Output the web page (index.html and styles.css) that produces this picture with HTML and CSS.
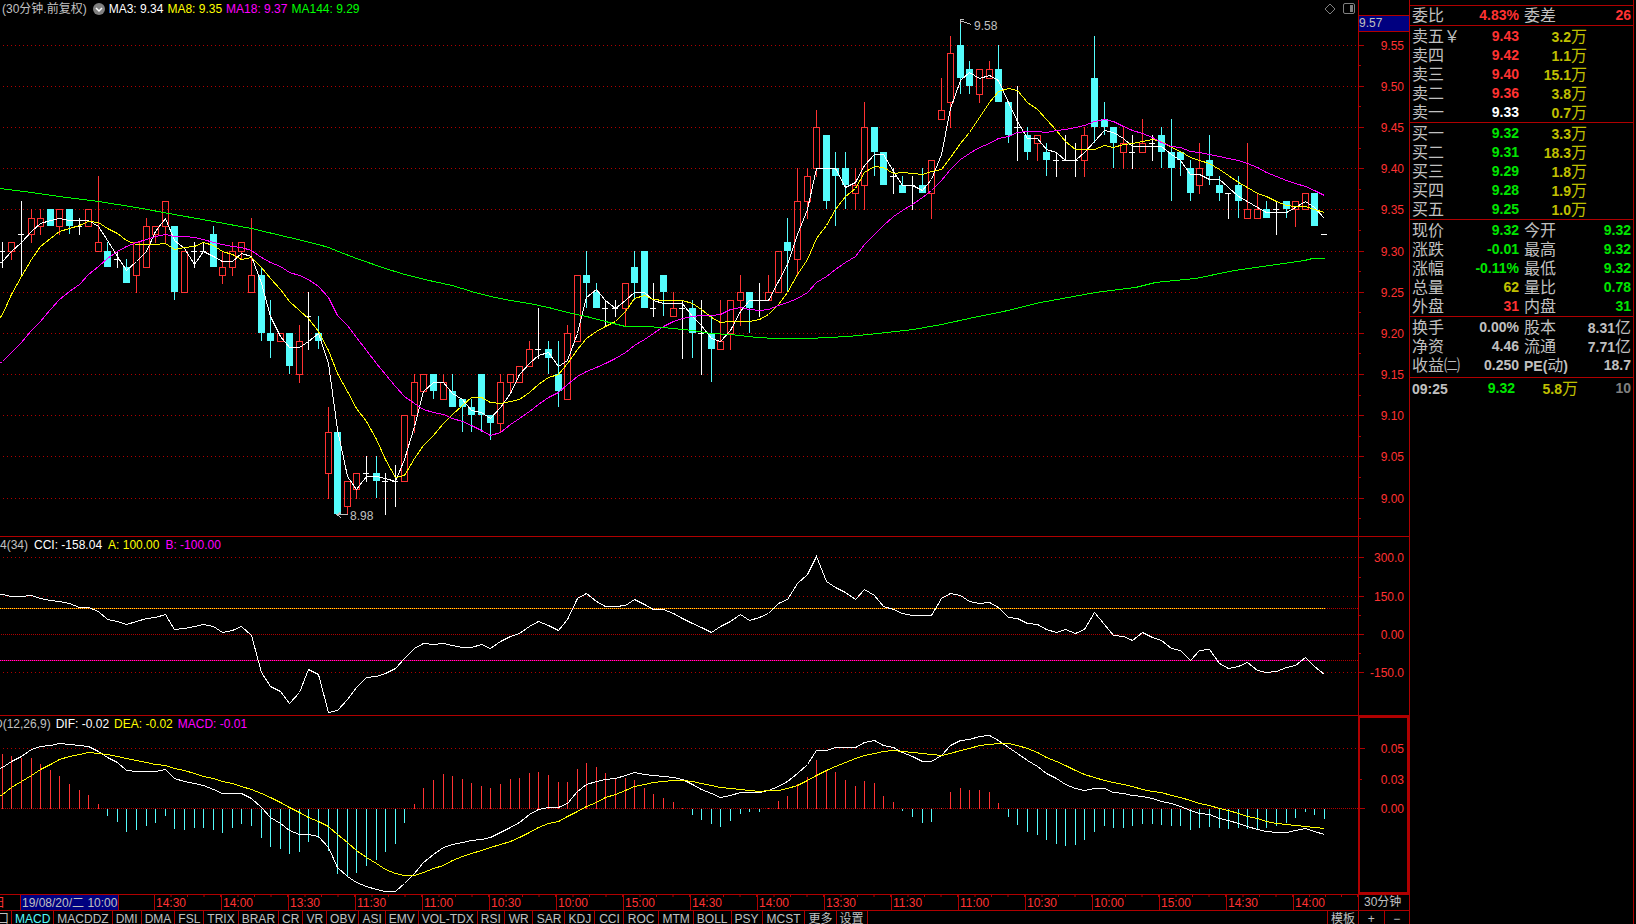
FILE: index.html
```html
<!DOCTYPE html>
<html lang="zh-CN">
<head>
<meta charset="utf-8">
<title>30分钟 K线</title>
<link rel="stylesheet" href="styles.css">
</head>
<body>
<div class="terminal">
  <main class="board">
    <section class="pane">
      <header class="pane-head pane-head-main">
        <span class="dim">(30分钟.前复权)</span>
        <button class="icon-btn" aria-label="展开">
          <svg width="12" height="12" viewBox="0 0 12 12"><circle cx="6" cy="6" r="6" fill="#808080"/><path d="M3 5l3 3 3-3" fill="none" stroke="#fff" stroke-width="1.5"/></svg>
        </button>
        <span class="white">MA3: 9.34</span>
        <span class="yellow">MA8: 9.35</span>
        <span class="magenta">MA18: 9.37</span>
        <span class="lime">MA144: 9.29</span>
        <span class="head-tools">
          <button class="icon-btn" aria-label="标记">
            <svg width="12" height="12" viewBox="0 0 12 12"><path d="M6 1l5 5-5 5-5-5z" fill="none" stroke="#808080"/></svg>
          </button>
          <button class="icon-btn" aria-label="侧栏">
            <svg width="12" height="12" viewBox="0 0 12 12"><rect x=".5" y=".5" width="11" height="10" rx="1.5" fill="none" stroke="#808080"/><rect x="7" y="2" width="3" height="7" fill="#808080"/></svg>
          </button>
        </span>
      </header>
      <svg class="plot" id="kline"></svg>
    </section>
    <aside class="axis">
      <svg class="plot" id="kline-axis"></svg>
      <div class="cursor-price">9.57</div>
    </aside>

    <section class="pane">
      <header class="pane-head pane-head-cci">
        <span class="dim">4(34)</span>
        <span class="white">CCI: -158.04</span>
        <span class="yellow">A: 100.00</span>
        <span class="magenta">B: -100.00</span>
      </header>
      <svg class="plot" id="cci"></svg>
    </section>
    <aside class="axis"><svg class="plot" id="cci-axis"></svg></aside>

    <section class="pane pane-last">
      <header class="pane-head pane-head-cut">
        <span class="dim">D(12,26,9)</span>
        <span class="white">DIF: -0.02</span>
        <span class="yellow">DEA: -0.02</span>
        <span class="magenta">MACD: -0.01</span>
      </header>
      <svg class="plot" id="macd"></svg>
    </section>
    <aside class="axis axis-active"><svg class="plot" id="macd-axis"></svg></aside>

    <div class="times">
      <div class="time-first"><span class="day">日</span><span class="cursor-time">19/08/20/二 10:00</span></div>
      <div class="time">14:30</div><div class="time">14:00</div><div class="time">13:30</div>
      <div class="time">11:30</div><div class="time">11:00</div><div class="time">10:30</div>
      <div class="time">10:00</div><div class="time">15:00</div><div class="time">14:30</div>
      <div class="time">14:00</div><div class="time">13:30</div><div class="time">11:30</div>
      <div class="time">11:00</div><div class="time">10:30</div><div class="time">10:00</div>
      <div class="time">15:00</div><div class="time">14:30</div><div class="time">14:00</div>
    </div>
    <div class="period">30分钟</div>

    <nav class="tabs">
      <button class="tab tab-cut">口</button>
      <button class="tab tab-on">MACD</button>
      <button class="tab">MACDDZ</button>
      <button class="tab">DMI</button>
      <button class="tab">DMA</button>
      <button class="tab">FSL</button>
      <button class="tab">TRIX</button>
      <button class="tab">BRAR</button>
      <button class="tab">CR</button>
      <button class="tab">VR</button>
      <button class="tab">OBV</button>
      <button class="tab">ASI</button>
      <button class="tab">EMV</button>
      <button class="tab">VOL-TDX</button>
      <button class="tab">RSI</button>
      <button class="tab tab-wide">WR</button>
      <button class="tab tab-wide">SAR</button>
      <button class="tab">KDJ</button>
      <button class="tab tab-wide">CCI</button>
      <button class="tab tab-wide">ROC</button>
      <button class="tab tab-wide">MTM</button>
      <button class="tab">BOLL</button>
      <button class="tab">PSY</button>
      <button class="tab tab-wide">MCST</button>
      <button class="tab tab-wide">更多</button>
      <button class="tab">设置</button>
      <button class="tab tab-end">模板</button>
    </nav>
    <div class="zoomers"><button class="tab">+</button><button class="tab">−</button></div>
  </main>

  <aside class="quote">
    <table class="sheet sheet-top">
      <tr><th>委比</th><td class="red">4.83%</td><th>委差</th><td class="red">26</td></tr>
    </table>
    <table class="sheet book">
      <tr><th>卖五￥</th><td class="red">9.43</td><td class="gold">3.2<i>万</i></td><td></td></tr>
      <tr><th>卖四</th><td class="red">9.42</td><td class="gold">1.1<i>万</i></td><td></td></tr>
      <tr><th>卖三</th><td class="red">9.40</td><td class="gold">15.1<i>万</i></td><td></td></tr>
      <tr><th>卖二</th><td class="red">9.36</td><td class="gold">3.8<i>万</i></td><td></td></tr>
      <tr><th>卖一</th><td class="white">9.33</td><td class="gold">0.7<i>万</i></td><td></td></tr>
    </table>
    <table class="sheet book">
      <tr><th>买一</th><td class="green">9.32</td><td class="gold">3.3<i>万</i></td><td></td></tr>
      <tr><th>买二</th><td class="green">9.31</td><td class="gold">18.3<i>万</i></td><td></td></tr>
      <tr><th>买三</th><td class="green">9.29</td><td class="gold">1.8<i>万</i></td><td></td></tr>
      <tr><th>买四</th><td class="green">9.28</td><td class="gold">1.9<i>万</i></td><td></td></tr>
      <tr><th>买五</th><td class="green">9.25</td><td class="gold">1.0<i>万</i></td><td></td></tr>
    </table>
    <table class="sheet">
      <tr><th>现价</th><td class="green">9.32</td><th>今开</th><td class="green">9.32</td></tr>
      <tr><th>涨跌</th><td class="green">-0.01</td><th>最高</th><td class="green">9.32</td></tr>
      <tr><th>涨幅</th><td class="green">-0.11%</td><th>最低</th><td class="green">9.32</td></tr>
      <tr><th>总量</th><td class="gold">62</td><th>量比</th><td class="green">0.78</td></tr>
      <tr><th>外盘</th><td class="red">31</td><th>内盘</th><td class="green">31</td></tr>
    </table>
    <table class="sheet sheet-basics">
      <tr><th>换手</th><td>0.00%</td><th>股本</th><td>8.31<i>亿</i></td></tr>
      <tr><th>净资</th><td>4.46</td><th>流通</th><td>7.71<i>亿</i></td></tr>
      <tr><th>收益㈡</th><td>0.250</td><th><b>PE(</b>动<b>)</b></th><td>18.7</td></tr>
    </table>
    <table class="sheet sheet-last">
      <tr><th><b>09:25</b></th><td class="green">9.32</td><td class="gold">5.8<i>万</i></td><td class="faint">10</td></tr>
    </table>
  </aside>
</div>
<script src="chart.js"></script>
</body>
</html>
```
FILE: styles.css
```css
* { box-sizing: border-box; }

:root {
  --line: #b00000;
  --red: #ff3232;
  --grey: #c0c0c0;
  --navy: #000080;
}

body {
  margin: 0;
  background: #000;
  color: var(--grey);
  font: 12px/16px "Liberation Sans", "Noto Sans CJK SC", sans-serif;
}

button {
  margin: 0;
  padding: 0;
  border: 0;
  background: none;
  color: inherit;
  font: inherit;
}

.terminal {
  display: grid;
  grid-template-columns: 1fr 227px;
  height: 100vh;
  overflow: hidden;
}

.board {
  display: grid;
  grid-template-columns: minmax(0, 1fr) 51px;
  grid-template-rows: minmax(0, 537fr) minmax(0, 179fr) minmax(0, 178fr) 16px 14px;
  min-width: 0;
}

.pane,
.axis {
  position: relative;
  overflow: hidden;
  border-bottom: 1px solid var(--line);
}

.pane-last { border-bottom: 0; }

.axis { border-left: 1px solid var(--line); }

.axis-active { border: 2px solid var(--line); }

.plot {
  position: absolute;
  inset: 0;
  width: 100%;
  height: 100%;
}

.pane-head {
  position: relative;
  z-index: 1;
  display: flex;
  gap: 5px;
  white-space: nowrap;
}

.pane-head-main {
  align-items: center;
  gap: 4px;
  padding: 1px 3px 0 2px;
}

.pane-head-main > .icon-btn { margin-left: 2px; }

.pane-head-cci { gap: 6px; }

.pane-head-cut { margin-left: -6px; }

.head-tools {
  display: flex;
  gap: 7px;
  margin-left: auto;
}

.icon-btn { display: flex; }

.cursor-price {
  position: absolute;
  top: 15px;
  left: 0;
  right: 0;
  height: 17px;
  border: solid var(--line);
  border-width: 1px 0;
  background: var(--navy);
  line-height: 15px;
}

.times {
  display: grid;
  grid-template-columns: 154fr repeat(17, 67fr) 65fr;
  border-top: 1px solid var(--line);
  line-height: 16px;
  color: var(--red);
  overflow: hidden;
}

.time-first {
  display: flex;
  overflow: hidden;
}

.day {
  flex: 0 0 20px;
  text-indent: -7px;
}

.cursor-time {
  flex: none;
  padding: 0 1px;
  border: solid var(--line);
  border-width: 0 1px;
  background: var(--navy);
  color: var(--grey);
}

.time {
  padding-left: 1px;
  border-left: 1px solid var(--line);
  background: linear-gradient(90deg, transparent calc(100% - 1px), var(--line) 0) 0 0 / 25% 2px repeat-x;
}

.period {
  border: solid var(--line);
  border-width: 1px 0 0 1px;
  padding-left: 5px;
  line-height: 15px;
  white-space: nowrap;
}

.tabs,
.zoomers {
  display: flex;
  min-width: 0;
  border-top: 1px solid var(--line);
  overflow: hidden;
}

.tab {
  flex: none;
  padding: 0 3px;
  border-right: 1px solid var(--line);
  line-height: 16px;
}

.tab-wide { padding-left: 4px; }

.tab-cut {
  width: 12px;
  padding: 0;
  text-indent: -5px;
}

.tab-on { color: #54fcfc; }

.tab-end {
  margin-left: auto;
  border-left: 1px solid var(--line);
  border-right: 0;
}

.zoomers { border-left: 1px solid var(--line); }

.zoomers .tab { flex: 1; }

.zoomers .tab:last-child { border-right: 0; }

.quote {
  margin-right: 2px;
  padding-top: 5px;
  border: solid var(--line);
  border-width: 0 1px;
}

.sheet {
  display: block;
  padding: 1px 2px 0 2px;
  border-top: 1px solid var(--line);
}

.sheet tbody { display: block; }

.sheet tr {
  display: grid;
  grid-template-columns: 48px 59px 53px 1fr;
  height: 19px;
  line-height: 19px;
}

.book tr { grid-template-columns: 48px 59px 68px 1fr; }

.sheet-last tr { grid-template-columns: 48px 55px 63px 1fr; }

.sheet-top { padding-top: 0; }

.sheet-basics { padding-bottom: 2px; }

.sheet th,
.sheet td {
  padding: 0;
  white-space: nowrap;
}

.sheet th {
  font-size: 16px;
  font-weight: 400;
  text-align: left;
}

.sheet td + th { padding-left: 5px; }

.sheet th b {
  font-size: 14px;
  font-weight: 700;
}

.sheet td {
  font-size: 14px;
  font-weight: 700;
  text-align: right;
}

.sheet i {
  font-size: 16px;
  font-style: normal;
  font-weight: 400;
}

.dim { color: var(--grey); }
.white { color: #fff; }
.yellow { color: #ff0; }
.magenta { color: #f0f; }
.lime { color: #0f0; }
.red { color: var(--red); }
.green { color: #00e600; }
.gold { color: #c0c000; }
.faint { color: #808080; }

.bar-up { fill: none; stroke: var(--red); }
.bar-down { fill: #54fcfc; stroke: #54fcfc; }
.bar-flat { fill: none; stroke: #fff; }
.rule { fill: none; stroke: var(--line); }
.curve { fill: none; }
.axis-text { fill: var(--red); text-anchor: end; }
.note { fill: var(--grey); }
.note-line { fill: none; stroke: var(--grey); }
.crisp { shape-rendering: crispEdges; }
```
FILE: chart.js
```javascript
// Bars as [open, high, low, close], prices in hundredths above 8.00.
const BARS = [
  [130,131,128,130],[130,131,129,131],[132,136,127,132],[132,135,131,134],[133,135,132,134],
  [135,135,133,133],[133,135,132,135],[135,135,132,133],[133,134,132,133],[133,135,133,135],
  [130,139,130,131],[130,131,128,128],[129,130,128,129],[128,129,126,126],[127,131,125,131],
  [128,134,128,133],[132,133,131,133],[133,136,131,136],[133,133,124,125],[125,130,125,130],
  [130,131,128,130],[130,131,130,130],[132,133,128,128],[127,130,126,128],[128,131,127,130],
  [130,131,129,131],[125,134,125,127],[127,128,119,120],[120,124,117,119],[119,120,119,120],
  [120,120,115,116],[115,121,114,119],[122,125,118,122],[120,122,118,119],[103,111,100,108],
  [108,108,98,98],[99,102,98,102],[101,103,100,103],[103,105,102,103],[103,105,100,102],
  [102,103,98,102],[102,104,99,102],[102,110,102,110],[110,115,108,114],[113,115,113,115],
  [115,115,112,113],[112,115,112,114],[113,115,111,111],[112,112,108,111],[111,112,108,110],
  [115,115,108,110],[110,110,107,109],[109,115,108,114],[114,115,113,115],[114,116,114,116],
  [116,119,116,118],[118,123,117,118],[118,119,115,117],[115,119,111,113],[112,121,112,120],
  [119,127,119,127],[127,130,123,126],[125,126,123,123],[123,124,121,123],[123,124,122,123],
  [123,126,121,126],[128,130,124,126],[130,130,123,123],[123,126,122,123],[127,127,122,125],
  [122,125,122,123],[123,124,117,123],[123,124,117,120],[120,124,115,120],[120,122,114,118],
  [118,124,118,119],[120,124,118,124],[124,127,121,125],[125,125,120,123],[124,126,122,124],
  [124,127,124,125],[125,130,125,130],[131,134,125,130],[129,140,127,136],[136,140,134,139],
  [140,147,139,145],[144,144,135,136],[140,142,133,139],[140,142,135,138],[137,140,135,138],
  [138,148,135,145],[145,145,139,142],[142,142,138,138],[139,140,137,139],[138,139,137,137],
  [138,139,135,138],[138,140,137,137],[137,141,134,141],[146,151,146,147],[148,156,145,154],
  [155,158,149,151],[152,153,149,150],[149,152,148,152],[151,153,151,152],[152,155,148,148],
  [148,148,143,144],[145,150,141,145],[144,145,141,142],[143,144,141,144],[142,143,139,141],
  [141,142,139,141],[141,144,141,141],[141,143,139,141],[141,145,139,144],[151,156,143,145],
  [146,148,144,145],[145,145,140,143],[142,145,140,143],[142,144,140,142],[142,146,142,143],
  [143,144,141,143],[144,145,140,142],[142,146,136,140],[142,142,139,141],[140,141,136,137],
  [138,143,137,140],[141,144,138,139],[138,139,136,137],[137,137,134,137],[138,139,134,136],
  [134,143,134,135],[134,137,134,135],[135,136,134,134],[135,136,132,135],[136,136,134,135],
  [135,136,133,136],[135,137,135,137],[137,137,133,133],[132,132,132,132]
];

// Averages of the bars that precede a full window.
const MA3_HEAD = [128.7, 130];
const MA8_HEAD = [122.3, 124.7, 126.9, 129, 130.6, 131.5, 132.4];
const MA18_HEAD = [116.6, 117.7, 118.9, 120.3, 121.5, 122.9, 124.1, 125.1, 125.9, 127.1,
  128.1, 129.1, 129.9, 130.5, 131, 131.4, 131.8];

// Long average as x, y pairs.
const MA144 = [[0,188],[31,192],[59,196],[98,201],[136,207],[174,214],[213,221],[251,228],
  [289,237],[318,244],[328,247],[338,251],[356,258],[385,268],[404,274],[433,281],[452,285],
  [471,291],[490,296],[510,300],[529,303],[548,307],[567,312],[586,316],[605,321],[625,326],
  [644,326],[663,327],[692,330],[711,333],[730,334],[757,337],[776,338],[808,338],[848,336],
  [877,333],[913,329],[941,324],[973,317],[1003,311],[1040,302],[1095,292],[1135,287],
  [1155,282],[1195,278],[1234,270],[1283,263],[1304,260],[1312,258],[1324,258]];

// Indicator curves: height per bar, three units to a pixel.
const CCI = [193,198,199,196,204,210,213,220,230,232,242,267,272,283,274,263,262,253,298,293,
  287,283,289,307,299,289,316,427,469,482,520,487,418,432,547,541,507,470,442,437,
  430,415,385,353,340,343,340,344,352,352,343,354,334,319,308,288,272,286,300,266,
  204,190,213,229,229,224,208,222,238,236,250,265,278,290,307,288,273,251,271,260,
  248,218,207,160,132,79,153,172,185,206,178,194,227,237,250,256,256,256,203,189,
  196,214,220,217,231,262,263,280,281,298,305,298,310,297,247,281,316,319,331,307,
  322,331,355,359,391,361,358,400,415,409,397,421,425,424,412,406,382,409,431];
const DIF = [170,154,137,118,109,105,100,102,106,107,122,142,157,181,184,184,184,178,205,213,
  219,226,237,250,250,250,263,292,320,338,360,371,371,377,412,470,498,516,528,537,
  544,544,518,488,456,433,412,401,395,391,387,381,366,350,335,313,298,290,292,279,
  244,221,213,208,205,195,187,192,196,197,202,208,222,236,249,260,254,247,247,247,
  240,228,214,188,163,121,121,112,112,112,95,91,104,112,126,138,152,152,135,105,
  91,88,79,76,90,112,130,150,167,188,205,223,234,239,235,235,245,250,256,259,
  265,272,280,287,301,308,313,323,331,338,348,356,362,365,365,361,355,362,371];
const DEA = [252,232,212,194,176,162,148,139,133,127,128,131,137,145,151,157,162,166,174,181,
  189,197,204,213,220,227,237,248,262,277,291,306,321,332,348,372,396,419,441,460,
  478,490,496,494,487,475,464,450,439,429,421,412,403,394,380,366,352,340,332,319,
  303,289,275,261,251,240,229,222,217,213,211,209,212,218,225,232,235,238,241,242,
  241,239,233,224,210,194,179,167,155,145,136,129,123,121,122,125,130,132,136,129,
  121,115,106,101,98,99,105,114,127,140,152,166,179,191,200,209,215,221,229,236,
  242,247,254,260,269,278,285,293,300,309,317,324,332,338,343,346,349,352,355];

const NS = 'http://www.w3.org/2000/svg';
const BASE = { width: 1358, kline: 536, cci: 178, macd: 178 };
const priceY = v => 44.6 + (155 - v) * 8.236;

function add(svg, tag, cls, attrs, text) {
  const el = document.createElementNS(NS, tag);
  el.setAttribute('class', cls);
  for (const key in attrs) el.setAttribute(key, attrs[key]);
  if (text) el.textContent = text;
  svg.appendChild(el);
  return el;
}

function panel(id, baseHeight) {
  const svg = document.getElementById(id);
  svg.replaceChildren();
  const box = svg.getBoundingClientRect();
  const sx = box.width / BASE.width;
  const sy = box.height / baseHeight;
  return {
    svg,
    width: box.width,
    x: v => Math.round(v * sx),
    bar: i => Math.round((1.9 + i * 9.58) * sx),
    y: v => Math.round(v * sy)
  };
}

function rule(p, y, step, from = 3) {
  add(p.svg, 'path', 'rule crisp', {
    d: `M${from} ${y + 0.5}H${p.width}`,
    'stroke-dasharray': `1 ${step - 1}`
  });
}

function curve(p, points, color) {
  const d = points.map(([x, y], i) => `${i ? 'L' : 'M'}${x + 0.5} ${y + 0.5}`).join('');
  add(p.svg, 'path', 'curve crisp', { d, stroke: color });
}

function average(n, head) {
  return BARS.map((bar, i) => {
    if (i < n - 1) return head[i];
    let sum = 0;
    for (let k = i - n + 1; k <= i; k++) sum += BARS[k][3];
    return sum / n;
  });
}

function extendLeft(points) {
  const [a, b] = points;
  const y = a[1] - Math.round((b[1] - a[1]) * a[0] / (b[0] - a[0]));
  return [[-1, y], ...points];
}

function drawKline() {
  const p = panel('kline', BASE.kline);
  const price = v => p.y(priceY(v));
  for (let v = 155; v >= 100; v -= 5) rule(p, price(v), 4);

  BARS.forEach(([open, high, low, close], i) => {
    const x = p.bar(i);
    const top = price(Math.max(open, close));
    const bottom = price(Math.min(open, close));
    const hi = price(high);
    const lo = price(low);
    if (open === close) {
      add(p.svg, 'path', 'bar-flat crisp', {
        d: `M${x - 3} ${top + 0.5}h6` + (hi === lo ? '' : `M${x + 0.5} ${hi}V${lo + 1}`)
      });
    } else if (close > open) {
      add(p.svg, 'path', 'bar-up crisp', {
        d: `M${x - 2.5} ${top + 0.5}h6V${bottom + 0.5}h-6z` +
          `M${x + 0.5} ${hi}V${top}M${x + 0.5} ${bottom + 1}V${lo + 1}`
      });
    } else {
      add(p.svg, 'path', 'bar-down crisp', {
        d: `M${x - 2.5} ${top + 0.5}h6V${bottom - 0.5}h-6zM${x + 0.5} ${hi}V${lo}`
      });
    }
  });

  const line = values => extendLeft(values.map((v, i) => [p.bar(i), price(v)]));
  curve(p, line(average(3, MA3_HEAD)), '#fff');
  curve(p, line(average(8, MA8_HEAD)), '#ff0');
  curve(p, line(average(18, MA18_HEAD)), '#f0f');
  curve(p, MA144.map(([x, y]) => [p.x(x), p.y(y)]), '#0f0');

  const hx = p.bar(100), hy = price(158);
  add(p.svg, 'path', 'note-line crisp', {
    d: `M${hx + 11} ${hy + 4.5}L${hx} ${hy + 0.5}M${hx + 0.5} ${hy + 4}V${hy - 0.5}H${hx + 4}`
  });
  add(p.svg, 'text', 'note', { x: hx + 14, y: hy + 10 }, '9.58');
  const lx = p.bar(35), ly = price(98);
  add(p.svg, 'path', 'note-line crisp', {
    d: `M${lx + 11} ${ly + 0.5}H${lx}M${lx + 4} ${ly - 2}L${lx} ${ly + 0.5}L${lx + 4} ${ly + 4}`
  });
  add(p.svg, 'text', 'note', { x: lx + 13, y: ly + 6 }, '8.98');
}

function drawCci() {
  const p = panel('cci', BASE.cci);
  const local = v => v / 3 - 7;
  [20, 59, 135].forEach(y => rule(p, p.y(y), 4));
  [71, 97, 123].forEach(y => rule(p, p.y(y), 2, 1));
  const end = p.bar(138) + 1;
  [[71, '#ff0'], [123, '#f0f']].forEach(([y, color]) => {
    add(p.svg, 'path', 'curve crisp', {
      d: `M0 ${p.y(y) + 0.5}H${end}`, stroke: color, 'stroke-dasharray': '1 1'
    });
  });
  curve(p, extendLeft(CCI.map((v, i) => [p.bar(i), p.y(local(v))])), '#fff');
}

function drawMacd() {
  const p = panel('macd', BASE.macd);
  const local = v => p.y(v / 3 - 6);
  const zero = p.y(92);
  rule(p, p.y(32), 4);
  rule(p, zero, 2, 1);
  DIF.forEach((v, i) => {
    const size = (DEA[i] - v) * 2;
    const x = p.bar(i) + 0.5;
    const tip = local(295 - size);
    if (Math.abs(size) < 2) return;
    add(p.svg, 'path', (size > 0 ? 'bar-up' : 'bar-down') + ' crisp', { d: `M${x} ${zero + 0.5}V${tip}` });
  });
  curve(p, extendLeft(DIF.map((v, i) => [p.bar(i), local(v)])), '#fff');
  curve(p, extendLeft(DEA.map((v, i) => [p.bar(i), local(v)])), '#ff0');
}

function drawAxis(id, baseHeight, marks, minors, right) {
  const svg = document.getElementById(id);
  svg.replaceChildren();
  const scale = svg.getBoundingClientRect().height / baseHeight;
  marks.forEach(([y, label, small]) => {
    const at = Math.round(y * scale);
    add(svg, 'path', 'rule crisp', { d: `M0 ${at + 0.5}h${small ? 2 : 5}` });
    add(svg, 'text', 'axis-text', { x: right, y: at + 5 }, label);
  });
  minors.forEach(y => {
    add(svg, 'path', 'rule crisp', { d: `M0 ${Math.round(y * scale) + 0.5}h2` });
  });
}

function draw() {
  drawKline();
  drawCci();
  drawMacd();
  const marks = [], minors = [];
  for (let v = 155; v >= 100; v -= 5) {
    marks.push([priceY(v), ((v + 800) / 100).toFixed(2)]);
    minors.push(priceY(v - 2.5));
  }
  drawAxis('kline-axis', BASE.kline, marks, minors, 45);
  drawAxis('cci-axis', BASE.cci,
    [[20, '300.0'], [59, '150.0'], [97, '0.00'], [135, '-150.0']], [40, 78, 116], 45);
  drawAxis('macd-axis', 174, [[30, '0.05'], [61, '0.03', true], [90, '0.00']], [], 44);
}

draw();
window.addEventListener('resize', draw);
```
